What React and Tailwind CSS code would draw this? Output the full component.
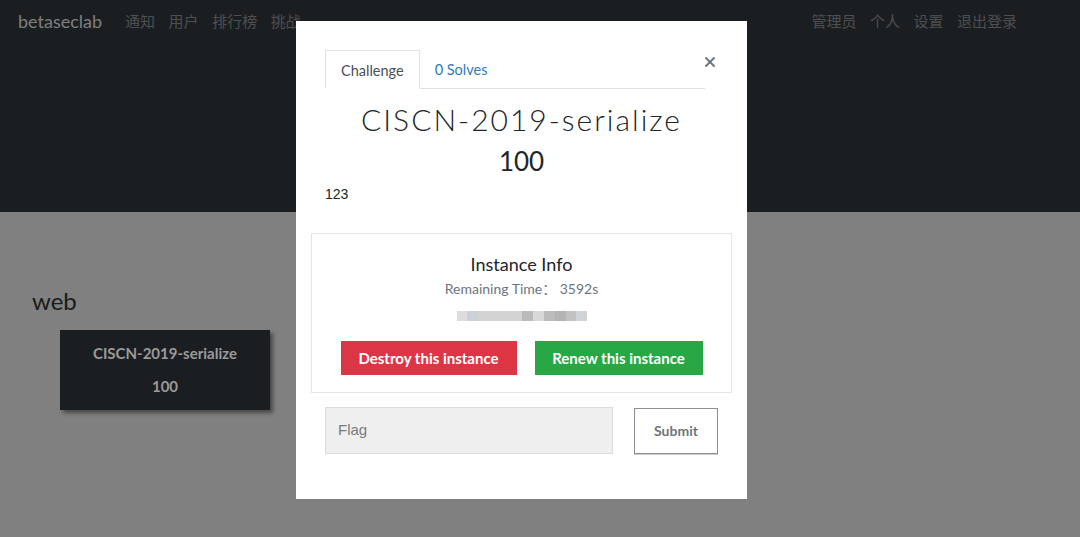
import { X } from "lucide-react";

const leftLinks = ["通知", "用户", "排行榜", "挑战"];
const rightLinks = ["管理员", "个人", "设置", "退出登录"];

const cjk = "font-['Lato','Noto_Sans_CJK_SC',sans-serif]";

const App = () => {
  return (
    <div className="relative h-[537px] w-[1080px] overflow-hidden bg-[#808080] font-['Lato',sans-serif]">
      {/* page behind the backdrop, drawn with dimmed colours */}
      <div className="h-[212px] bg-[#1b1e21]">
        <nav className="flex h-[42px] items-center pl-[18px] pr-[63px]">
          <span className="text-[18px] text-[#7f7f7f]">betaseclab</span>
          <div className={`ml-[23px] flex gap-[13.5px] text-[15px] text-[#4d4f51] ${cjk}`}>
            {leftLinks.map((l) => (
              <span key={l}>{l}</span>
            ))}
          </div>
          <div className={`ml-auto flex gap-[13.5px] text-[15px] text-[#4d4f51] ${cjk}`}>
            {rightLinks.map((l) => (
              <span key={l}>{l}</span>
            ))}
          </div>
        </nav>
      </div>
      <div className="pl-[32px] pt-[74px]">
        <h2 className="text-[24px] leading-[30px] text-[#1a1a1a]">web</h2>
        <div className="ml-[28px] mt-[14px] flex h-[80px] w-[210px] flex-col items-center gap-[18px] bg-[#1b1e21] pt-[16px] shadow-[3px_3px_4px_rgba(0,0,0,0.45)]">
          <p className="text-[15px] font-bold leading-[15px] text-[#9a9a9a]">CISCN-2019-serialize</p>
          <p className="text-[15px] font-bold leading-[15px] text-[#9a9a9a]">100</p>
        </div>
      </div>

      {/* modal */}
      <div className="absolute left-[296px] top-[21px] h-[478px] w-[451px] bg-white">
        <div className="relative px-[29px] pt-[29px]">
          <div className="flex h-[39px] w-[380px] items-end border-b border-[#dee2e6]">
            <div className="-mb-px flex h-[39px] items-center border border-b-white border-[#dee2e6] bg-white px-[15px] pt-[2px] text-[14.5px] text-[#495057]">
              Challenge
            </div>
            <div className="flex h-[39px] items-center px-[15px] pt-[2px] text-[14.5px] text-[#337ab7]">
              0 Solves
            </div>
          </div>
          <button className="absolute right-[29px] top-[33px] text-[#6c757d]">
            <X size={16} strokeWidth={3} />
          </button>
        </div>

        <h3 className="mt-[11px] text-center text-[30px] font-light leading-[38px] tracking-[2px] text-[#212529]">
          CISCN-2019-serialize
        </h3>
        <p className="mt-[7px] text-center text-[26px] leading-[32px] text-[#212529]">100</p>
        <p className="ml-[29px] mt-[7px] font-['Liberation_Sans',Arial,sans-serif] text-[14px] leading-[20px] text-[#212529]">
          123
        </p>

        <div className="mx-[15px] mt-[29px] flex h-[160px] flex-col items-center border border-[#e5e5e5] pt-[18px]">
          <p className="text-[18px] leading-[24px] text-[#212529]">Instance Info</p>
          <p className={`mt-[3px] text-[14px] leading-[20px] text-[#6c757d] ${cjk}`}>Remaining Time：&nbsp;3592s</p>
          <div className="mt-[12px] flex h-[10px] w-[130px]">
            <div className="w-[10px] bg-[#dedcdc]" />
            <div className="w-[11px] bg-[#cdd0d4]" />
            <div className="w-[44px] bg-[#d3d3d3]" />
            <div className="w-[11px] bg-[#b9babb]" />
            <div className="w-[11px] bg-[#d8d8d8]" />
            <div className="w-[11px] bg-[#bcbcbd]" />
            <div className="w-[11px] bg-[#b4b4b4]" />
            <div className="w-[10px] bg-[#c2c2c2]" />
            <div className="w-[11px] bg-[#d0d3d8]" />
          </div>
          <div className="mt-[20px] flex gap-[18px]">
            <button className="h-[34px] w-[176px] bg-[#dc3545] text-[15px] font-bold text-white">
              Destroy this instance
            </button>
            <button className="h-[34px] w-[168px] bg-[#28a745] text-[15px] font-bold text-white">
              Renew this instance
            </button>
          </div>
        </div>

        <div className="mx-[29px] mt-[14px] flex items-center">
          <div className="flex h-[47px] w-[288px] items-center border border-[#dcdcdc] bg-[#efefef] pl-[12px] font-['Liberation_Sans',Arial,sans-serif] text-[15px] text-[#7b7b7b]">
            Flag
          </div>
          <button className="ml-auto h-[46px] w-[84px] border border-[#8a9096] text-[14px] font-bold text-[#6c757d] shadow-[0_1px_0_#ccc]">
            Submit
          </button>
        </div>
      </div>
    </div>
  );
};

export default App;
